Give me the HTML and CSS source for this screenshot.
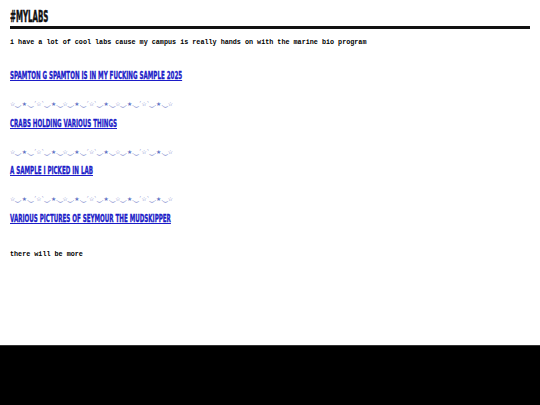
FILE: index.html
```html
<!DOCTYPE html>
<html>
<head>
<meta charset="utf-8">
<link rel="stylesheet" href="styles.css">
</head>
<body>
<div class="page">
  <main class="content">
    <h1 class="title"><span class="title-text">#MYLABS</span></h1>
    <p class="intro">i have a lot of cool labs cause my campus is really hands on with the marine bio program</p>
    <ul class="labs">
      <li class="lab"><a class="lab-link" href="#">SPAMTON G SPAMTON IS IN MY FUCKING SAMPLE 2025</a></li>
      <li class="deco">☆‿.★.‿´☆`‿.★.‿☆‿.★.‿´☆`‿.★.‿☆‿.★.‿´☆`‿.★.‿☆</li>
      <li class="lab"><a class="lab-link" href="#">CRABS HOLDING VARIOUS THINGS</a></li>
      <li class="deco">☆‿.★.‿´☆`‿.★.‿☆‿.★.‿´☆`‿.★.‿☆‿.★.‿´☆`‿.★.‿☆</li>
      <li class="lab"><a class="lab-link" href="#">A SAMPLE I PICKED IN LAB</a></li>
      <li class="deco">☆‿.★.‿´☆`‿.★.‿☆‿.★.‿´☆`‿.★.‿☆‿.★.‿´☆`‿.★.‿☆</li>
      <li class="lab"><a class="lab-link" href="#">VARIOUS PICTURES OF SEYMOUR THE MUDSKIPPER</a></li>
    </ul>
    <p class="more">there will be more</p>
  </main>
  <footer class="footer"></footer>
</div>
</body>
</html>
```
FILE: styles.css
```css
html, body {
  margin: 0;
  padding: 0;
  background: #fff;
}
.page {
  min-height: 405px;
  display: flex;
  flex-direction: column;
}
.content {
  flex: 1;
  padding: 10px 10px 0 10px;
}
.title {
  margin: 0;
  font-weight: bold;
  font-size: 15px;
  line-height: 15px;
  color: #111;
  padding-bottom: 1px;
  border-bottom: 3px solid #111;
}
.title-text {
  display: inline-block;
  font-family: "DejaVu Sans", sans-serif;
  font-weight: bold;
  -webkit-text-stroke: 0.5px #111;
  transform: scaleX(0.47);
  transform-origin: left center;
}
.intro, .more {
  margin: 0;
  font-family: "Liberation Mono", monospace;
  font-weight: bold;
  font-size: 6.75px;
  line-height: 9px;
  color: #000;
}
.intro {
  margin-top: 9px;
}
.labs {
  list-style: none;
  margin: 23px 0 0 0;
  padding: 0;
  display: flex;
  flex-direction: column;
}
.lab {
  height: 12px;
  display: flex;
  align-items: center;
}
.lab-link {
  display: inline-block;
  font-family: "DejaVu Sans", sans-serif;
  font-weight: bold;
  font-size: 11px;
  line-height: 12px;
  color: #1c1cc8;
  -webkit-text-stroke: 0.4px #1c1cc8;
  text-decoration: underline;
  white-space: nowrap;
  transform: scaleX(0.505);
  transform-origin: left center;
}
.deco {
  margin: 16px 0 7.5px 0;
  height: 12px;
  display: flex;
  align-items: center;
  font-family: "DejaVu Sans", sans-serif;
  font-size: 5.8px;
  color: #5f72c4;
  white-space: nowrap;
}
.more {
  margin-top: 25px;
}
.footer {
  height: 59px;
  background: #000;
  border-top: 1px solid #333;
}
```
